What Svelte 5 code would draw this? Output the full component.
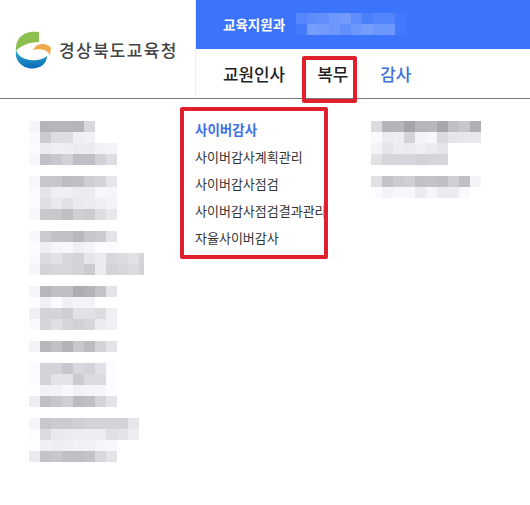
<script>
  // blurred blocks: each number is the grey level of one 11px cell
  const leftBlocks = [
    [0xf5,0xb5,0xb7,0xb7,0xb5,0xd9],
    [0xfa,0xcc,0xdd,0xdd,0xf0,0xf2],
    [0xfb,0xec,0xf0,0xee,0xec,0xec,0xf2,0xf4],
    [0xf7,0xc2,0xc8,0xd2,0xc0,0xc0,0xd2,0xde],
    [],
    [0xf7,0xc8,0xc8,0xbd,0xc0,0xcf,0xd4,0xe6],
    [0xfb,0xe6,0xef,0xf0,0xec,0xec,0xf8,0xf6],
    [0xfb,0xe0,0xea,0xe2,0xea,0xec,0xf0,0xf4],
    [0xf8,0xc8,0xc8,0xc0,0xd0,0xcc,0xde,0xe8],
    [],
    [0xf8,0xcc,0xc2,0xc2,0xb8,0xc8,0xcc,0xe4],
    [0xfc,0xf0,0xf6,0xf8,0xf0,0xf4,0xfc,0xfc],
    [0xfa,0xdc,0xe2,0xd8,0xd4,0xe6,0xec,0xd8,0xdc,0xe2,0xd6],
    [0xf6,0xd4,0xd8,0xd8,0xd4,0xcc,0xec,0xd4,0xd8,0xdc,0xd2],
    [],
    [0xf5,0xb8,0xc0,0xc0,0xae,0xb4,0xc4,0xe4],
    [0xfd,0xf0,0xfb,0xf0,0xf5,0xf3,0xff,0xff],
    [0xf0,0xd4,0xd4,0xcf,0xe2,0xe2,0xdc,0xf0],
    [0xfa,0xd6,0xe0,0xd6,0xd2,0xd8,0xec,0xf0],
    [],
    [0xf3,0xb8,0xc2,0xb4,0xc8,0xbc,0xd4,0xe4],
    [],
    [0xfb,0xd4,0xd4,0xc8,0xd8,0xd4,0xe2,0xfc],
    [0xfc,0xd4,0xe4,0xe4,0xcc,0xdc,0xdc,0xfc],
    [0xfe,0xf2,0xf4,0xf8,0xf2,0xf4,0xf6,0xfc],
    [0xee,0xc0,0xc8,0xd0,0xbc,0xc0,0xd4,0xe4],
    [],
    [0xf6,0xc8,0xcc,0xcc,0xd0,0xd4,0xd4,0xd4,0xd4,0xe6],
    [0xfd,0xdc,0xea,0xec,0xee,0xee,0xee,0xe0,0xe4,0xee],
    [0xfe,0xf0,0xee,0xf0,0xf2,0xf2,0xf6,0xf8],
    [0xea,0xc4,0xc8,0xc0,0xc0,0xc4,0xd8,0xe4]
  ];
  const rightBlocks = [
    [0xdc,0xb5,0xb5,0xa5,0xb6,0xb8,0xa8,0xc0,0xc8,0xb0],
    [0xfa,0xec,0xee,0xd4,0xf4,0xf8,0xdc,0xe6,0xe8,0xe8],
    [0xf4,0xe6,0xee,0xec,0xf0,0xec,0xe6],
    [0xe2,0xd6,0xd6,0xd8,0xd2,0xd6,0xd6],
    [],
    [0xe0,0xc4,0xcc,0xd0,0xc2,0xc4,0xc0,0xd0,0xc0,0xf4],
    [0xfc,0xf4,0xf8,0xf8,0xec,0xf6,0xec,0xec,0xfa]
  ];
  // same idea on the blue bar, as white alpha
  const nameBlocks = [
    [0.14,0.18,0.2,0.26,0.28,0.18,0.08,0.12,0.12,0.04],
    [0.05,0.3,0.28,0.26,0.2,0.26,0.3,0.26,0.26,0.04]
  ];

  const menuItems = ['사이버감사계획관리', '사이버감사점검', '사이버감사점검결과관리', '자율사이버감사'];

  function grey(v) {
    return `rgb(${v - 1},${v},${Math.min(v + 4, 255)})`;
  }
</script>

{#snippet blocks(rows, color)}
  <div class="blocks">
    {#each rows as row}
      <div class="block-row">
        {#each row as v}
          <span class="cell" style="background:{color(v)}"></span>
        {/each}
      </div>
    {/each}
  </div>
{/snippet}

<header>
  <div class="logo">
    <svg width="50" height="50" viewBox="10 24 50 50" aria-hidden="true">
      <defs>
        <linearGradient id="wave" x1="0" y1="0" x2="0" y2="1">
          <stop offset="0" stop-color="#2fb0d0" />
          <stop offset="1" stop-color="#0a68b8" />
        </linearGradient>
      </defs>
      <path d="M39 32C26 30 15 36 16 51C20 46 29 42 39 42Z" fill="#8cbf4e" />
      <path d="M16 50C14 62 24 68.500 32 68.500C41 68.500 47 63 47 56C42 60 36 61 30 60C23 59 18 56 16 50Z" fill="url(#wave)" />
      <path d="M33 50C35 46 38 44 42 44C46 44 50 46 51 48L50 55C48 52 46 50 42 49.500C39 49 36 49 33 50Z" fill="#f0a94a" />
    </svg>
    <span class="org">경상북도교육청</span>
  </div>
  <div class="head-right">
    <div class="bar">
      <strong>교육지원과</strong>
      {@render blocks(nameBlocks, (a) => `rgba(255,255,255,${a})`)}
    </div>
    <nav>
      <span class="tab">교원인사</span>
      <span class="tab marked">복무</span>
      <span class="tab active">감사</span>
    </nav>
  </div>
</header>

<main>
  <div class="col-left">{@render blocks(leftBlocks, grey)}</div>
  <div class="menu">
    <div class="menu-title">사이버감사</div>
    {#each menuItems as item}
      <div class="menu-item">{item}</div>
    {/each}
  </div>
  <div class="col-right">{@render blocks(rightBlocks, grey)}</div>
</main>

<style>
  :global(body) {
    background: #fff;
    color: #222;
    font-family: "Noto Sans CJK KR", "Noto Sans", sans-serif;
  }
  header {
    display: flex;
    height: 98px;
    border-bottom: 1px solid #777;
  }
  .logo {
    width: 185px;
    border-right: 1px solid #eee;
    display: flex;
    align-items: center;
    padding-left: 10px;
  }
  .org {
    margin-left: -1px;
    font-size: 17px;
    font-weight: 500;
    letter-spacing: 1.3px;
    color: #444;
    white-space: nowrap;
  }
  .head-right {
    flex: 1;
    display: flex;
    flex-direction: column;
  }
  .bar {
    height: 49px;
    background: #3b73fb;
    color: #fff;
    display: flex;
    align-items: center;
    padding: 0 0 2px 27px;
    box-sizing: border-box;
  }
  .bar strong {
    width: 73px;
    font-size: 13.5px;
    font-weight: 700;
    white-space: nowrap;
  }
  nav {
    height: 49px;
    display: flex;
    align-items: center;
    gap: 32px;
    padding: 0 0 1px 27px;
    box-sizing: border-box;
  }
  .tab {
    position: relative;
    font-size: 16.9px;
    font-weight: 500;
    white-space: nowrap;
  }
  .tab.active {
    color: #3d6fd8;
  }
  .tab.marked::after {
    content: '';
    position: absolute;
    left: -15px;
    right: -9px;
    top: -5px;
    height: 47px;
    border: 4px solid #e0202c;
    border-radius: 2px;
    box-sizing: border-box;
  }
  main {
    display: flex;
    align-items: flex-start;
  }
  .col-left {
    width: 151px;
    padding: 22px 0 0 29px;
    box-sizing: border-box;
  }
  .col-left .blocks {
    width: 115px;
    overflow: hidden;
  }
  .menu {
    width: 148px;
    height: 152px;
    margin: 8px 0 0 29px;
    padding: 5px 0 0 11px;
    border: 4px solid #e0202c;
    border-radius: 2px;
    box-sizing: border-box;
    white-space: nowrap;
    overflow: hidden;
  }
  .menu-title {
    height: 27px;
    line-height: 27px;
    font-size: 13.5px;
    font-weight: 700;
    color: #3f6fe6;
  }
  .menu-item {
    height: 27px;
    line-height: 27px;
    font-size: 13px;
    color: #333;
  }
  .col-right {
    margin-left: 43px;
    padding-top: 22px;
  }
  .block-row {
    display: flex;
    height: 11px;
  }
  .cell {
    flex: none;
    width: 11px;
    height: 11px;
  }
</style>
